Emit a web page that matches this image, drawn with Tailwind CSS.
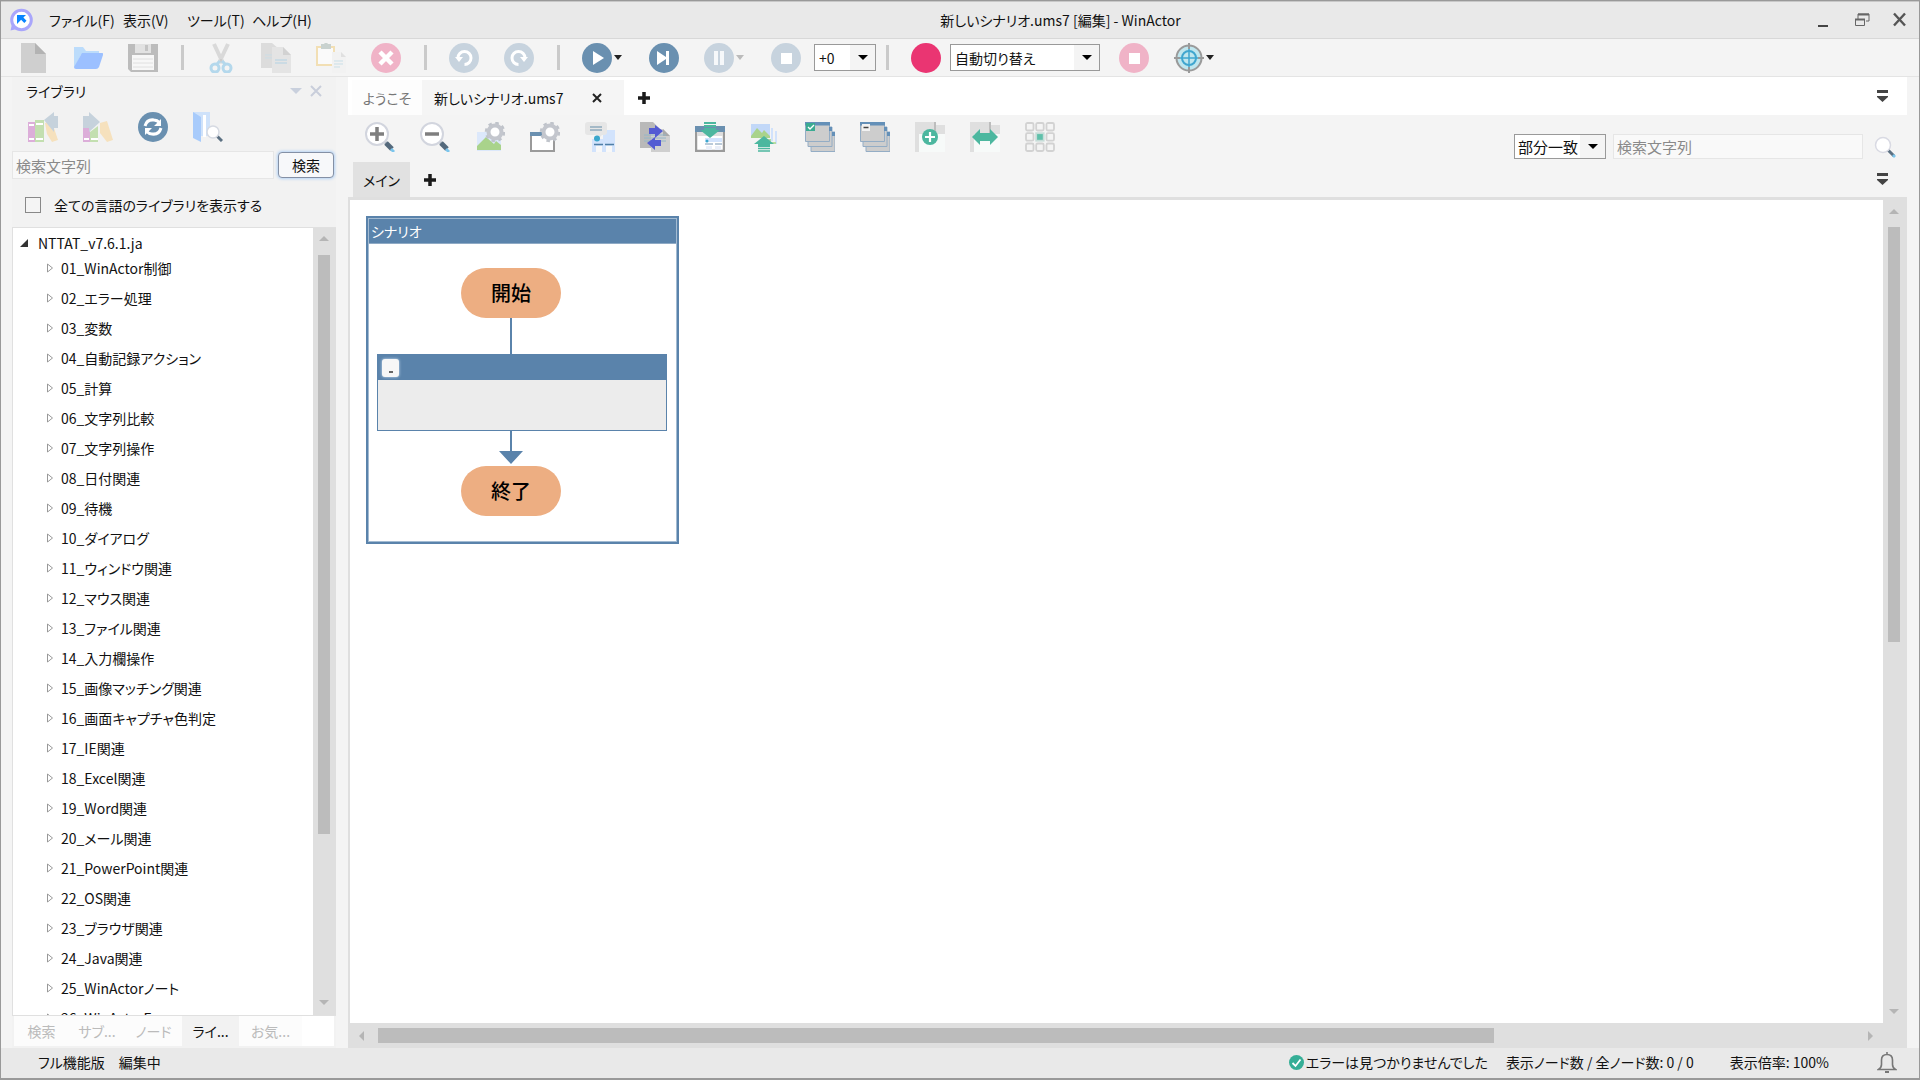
<!DOCTYPE html>
<html lang="ja">
<head>
<meta charset="utf-8">
<title>新しいシナリオ.ums7 [編集] - WinActor</title>
<script src="https://cdn.jsdelivr.net/npm/@tailwindcss/browser@4"></script>
</head>
<body class="h-screen overflow-hidden bg-[#f4f4f4] font-['Noto_Sans_CJK_JP',sans-serif] text-sm leading-5 text-[#111] [font-feature-settings:'palt']">
<div class="flex h-full flex-col border border-b-2 border-[#999]">

  <!-- Title bar -->
  <header class="flex h-[38px] shrink-0 items-center border-t border-b border-t-[#c8c8c8] border-b-[#d8d8d8] bg-[#e9e9e9]">
    <svg class="ml-2 size-6 shrink-0" viewBox="0 0 24 24"><path d="M3 16 1.500 22.500 8 21" fill="#a9a6fb"/><circle cx="12.500" cy="12" r="9.800" fill="#fff" stroke="#a9a6fb" stroke-width="3"/><path d="M8 7h9l-2.600 2.600 3.100 3.100-2.200 2.300-3.200-3.200L8 16z" fill="#0a84ff"/></svg>
    <nav class="ml-4 grid w-[265px] shrink-0 grid-cols-[74px_64px_65px_1fr] whitespace-nowrap">
      <button class="text-left">ファイル(F)</button><button class="text-left">表示(V)</button><button class="text-left">ツール(T)</button><button class="text-left">ヘルプ(H)</button>
    </nav>
    <h1 class="flex-1 text-center">新しいシナリオ.ums7 [編集] - WinActor</h1>
    <div class="flex w-28 shrink-0 items-center gap-[22px] pl-[9px]">
      <button aria-label="最小化"><svg class="size-4" viewBox="0 0 16 16"><path d="M2 13h10v2H2z" fill="#444"/></svg></button>
      <button aria-label="元に戻す"><svg class="size-4" viewBox="0 0 16 16" fill="none" stroke="#666"><path d="M4 7V2h11v7h-3" /><path d="M4 2.500h11" stroke-width="2"/><path d="M1.500 7.500h9v6h-9z"/><path d="M1 7.500h10" stroke-width="2"/></svg></button>
      <button aria-label="閉じる"><svg class="size-4" viewBox="0 0 16 16" fill="none" stroke="#555" stroke-width="2.400"><path d="m2 1.500 11 12m0-12-11 12"/></svg></button>
    </div>
  </header>

  <!-- Main toolbar -->
  <div class="flex h-[38px] shrink-0 items-center border-b border-[#e4e4e4] pl-[17px]" role="toolbar">
    <div class="flex gap-[25px]">
      <button aria-label="新規"><svg class="size-[30px]" viewBox="0 0 30 30"><path d="M3 0h14l11 11v19H3z" fill="#cfcfcf"/><path d="M17 0v11h11z" fill="#b3b3b3"/></svg></button>
      <button aria-label="開く"><svg class="size-[30px]" viewBox="0 0 30 30"><path d="M1 4h9l3 4h13v4H8L1 25z" fill="#bcdcfb"/><path d="M9 10h20q2 0 1 2l-4 12q-1 2-3 2H3q-2 0-2-2z" fill="#9cc0ff"/></svg></button>
      <button aria-label="保存"><svg class="size-[30px]" viewBox="0 0 30 30"><path d="M0 1h30v28H3l-3-3z" fill="#bcbcbc"/><path d="M4 12h22v15H4z" fill="#f7f7f7"/><path d="M7 1h16v9H7z" fill="#e2e2e2"/><path d="M17 2h3v6h-3z" fill="#c4c4c4"/><path d="M5 16h20M5 20h20M5 24h20" stroke="#e0e0e0"/></svg></button>
    </div>
    <span class="mr-[22px] ml-[23px] h-[25px] w-[3px] bg-[#cacaca]"></span>
    <div class="flex gap-[25px]">
      <button aria-label="切り取り"><svg class="size-[30px]" viewBox="0 0 30 30" fill="none"><path d="m8 1 9 19M22 1l-9 19" stroke="#d9d9d9" stroke-width="4"/><path d="M16 16h-2v3h2z" fill="#ccc"/><g stroke="#b4d8ec" stroke-width="3"><circle cx="9" cy="25" r="4"/><circle cx="21" cy="25" r="4"/><path d="m11 21 3-3m5 3-3-3"/></g></svg></button>
      <button aria-label="コピー"><svg class="size-[30px]" viewBox="0 0 30 30"><path d="M0 0h11l7 6v19H0z" fill="#dcdcdc"/><path d="M4 12h9M4 15h9" stroke="#cbdde6"/><path d="M11 4h11l8 8v18H11z" fill="#e4e4e4"/><path d="m22 4 8 8h-8z" fill="#d2d2d2"/><path d="M14 17h12M14 20h12" stroke="#c2d8e4" stroke-width="1.500"/></svg></button>
      <button aria-label="貼り付け"><svg class="size-[30px]" viewBox="0 0 30 30"><path d="M1 4h17v18H1z" fill="#fafafa" stroke="#f2dfb4" stroke-width="2"/><path d="M5 1h3q2-3 4 0h3v5H5z" fill="#c9d2cf"/><path d="M16 9h9l5 5v16H16z" fill="#f2f2f2"/><path d="m25 9 5 5h-5z" fill="#e0e0e0"/><path d="M18 18h9M18 21h9M18 24h6" stroke="#c9dfe8"/></svg></button>
      <button aria-label="削除"><svg class="size-[30px]" viewBox="0 0 30 30"><circle cx="15" cy="15" r="15" fill="#f0b3c7"/><path d="m9 9 12 12m0-12L9 21" stroke="#fff" stroke-width="4.500"/></svg></button>
    </div>
    <span class="mr-[22px] ml-[23px] h-[25px] w-[3px] bg-[#cacaca]"></span>
    <div class="flex gap-[25px]">
      <button aria-label="元に戻す"><svg class="size-[30px]" viewBox="0 0 30 30"><circle cx="15" cy="15" r="15" fill="#c7d3de"/><path d="M9 15a6.500 6.500 0 1 1 6.500 6.500" fill="none" stroke="#fff" stroke-width="3"/><path d="M6 14h8l-4 5z" fill="#fff"/></svg></button>
      <button aria-label="やり直し"><svg class="size-[30px]" viewBox="0 0 30 30"><circle cx="15" cy="15" r="15" fill="#c7d3de"/><path d="M21 15a6.500 6.500 0 1 0-6.500 6.500" fill="none" stroke="#fff" stroke-width="3"/><path d="M24 14h-8l4 5z" fill="#fff"/></svg></button>
    </div>
    <span class="mr-[22px] ml-[23px] h-[25px] w-[3px] bg-[#cacaca]"></span>
    <button class="flex items-center gap-0.5" aria-label="実行"><svg class="size-[30px]" viewBox="0 0 30 30"><circle cx="15" cy="15" r="15" fill="#6a90b0"/><path d="m11 8 11 7-11 7z" fill="#fff"/></svg><svg class="h-[5px] w-2" viewBox="0 0 8 5"><path d="M0 0h8L4 5z" fill="#222"/></svg></button>
    <button class="ml-[27px]" aria-label="ステップ実行"><svg class="size-[30px]" viewBox="0 0 30 30"><circle cx="15" cy="15" r="15" fill="#6a90b0"/><path d="m8 8 9 6V8h3v14h-3v-6l-9 6z" fill="#fff"/></svg></button>
    <button class="ml-[25px] flex items-center gap-0.5" aria-label="一時停止"><svg class="size-[30px]" viewBox="0 0 30 30"><circle cx="15" cy="15" r="15" fill="#c7d3de"/><path d="M10 8h4v14h-4zm6 0h4v14h-4z" fill="#f6f8fa"/></svg><svg class="h-[5px] w-2" viewBox="0 0 8 5"><path d="M0 0h8L4 5z" fill="#bbb"/></svg></button>
    <button class="ml-[27px]" aria-label="停止"><svg class="size-[30px]" viewBox="0 0 30 30"><circle cx="15" cy="15" r="15" fill="#c7d3de"/><path d="M10 10h11v11H10z" fill="#fff"/></svg></button>
    <div class="relative ml-[13px] flex">
      <select aria-label="速度" class="h-[27px] w-[62px] appearance-none border border-[#999] bg-white pl-1"><option>+0</option></select>
      <span class="pointer-events-none absolute inset-y-px right-px flex w-[25px] items-center justify-center bg-[#f4f4f4]"><svg class="h-[5px] w-2.5" viewBox="0 0 10 5"><path d="M0 0h10L5 5z"/></svg></span>
    </div>
    <span class="mr-[22px] ml-2.5 h-[25px] w-[3px] bg-[#cacaca]"></span>
    <button aria-label="記録"><svg class="size-[30px]" viewBox="0 0 30 30"><circle cx="15" cy="15" r="15" fill="#ea3572"/></svg></button>
    <div class="relative ml-[9px] flex">
      <select aria-label="記録モード" class="h-[27px] w-[150px] appearance-none border border-[#999] bg-white pl-1"><option>自動切り替え</option></select>
      <span class="pointer-events-none absolute inset-y-px right-px flex w-[25px] items-center justify-center bg-[#f4f4f4]"><svg class="h-[5px] w-2.5" viewBox="0 0 10 5"><path d="M0 0h10L5 5z"/></svg></span>
    </div>
    <button class="ml-[19px]" aria-label="記録停止"><svg class="size-[30px]" viewBox="0 0 30 30"><circle cx="15" cy="15" r="15" fill="#f0b3c7"/><path d="M10 10h11v11H10z" fill="#fff"/></svg></button>
    <button class="ml-[25px] flex items-center gap-0.5" aria-label="ターゲット選択"><svg class="size-[30px]" viewBox="0 0 30 30" fill="none"><circle cx="15" cy="15" r="12.500" fill="#bfe6ee" stroke="#9a9a9a" stroke-width="2"/><path d="M15 0v6m0 18v6M0 15h6m18 0h6" stroke="#9a9a9a" stroke-width="2"/><circle cx="15" cy="15" r="7" stroke="#3fa6cf" stroke-width="2"/><path d="M15 6v18M6 15h18" stroke="#3fa6cf" stroke-width="1.500"/></svg><svg class="h-[5px] w-2" viewBox="0 0 8 5"><path d="M0 0h8L4 5z" fill="#222"/></svg></button>
  </div>

  <!-- Workspace -->
  <div class="flex min-h-0 flex-1 gap-3 pr-3 pl-[11px]">

    <aside class="flex w-[324px] shrink-0 flex-col bg-[#f2f2f2]">
      <div class="flex h-7 items-center pr-3.5 pl-3.5">
        <h2 class="flex-1">ライブラリ</h2>
        <button aria-label="メニュー"><svg class="mr-2 h-[6px] w-3" viewBox="0 0 12 6"><path d="M0 0h12L6 6z" fill="#c9d0dd"/></svg></button>
        <button aria-label="閉じる"><svg class="size-3" viewBox="0 0 12 12"><path d="m1 1 10 10m0-10L1 11" stroke="#c9cedb" stroke-width="2"/></svg></button>
      </div>
      <div class="flex gap-[25px] pt-[7px] pl-4">
        <button aria-label="取り込み"><svg class="size-[30px]" viewBox="0 0 30 30"><path d="M0 10h7v20H0z" fill="#dcaed9"/><path d="M7 8h9v22H7z" fill="#c3dfb0"/><path d="m17 11 7-1 6 18-6 2-5-8z" fill="#f6e1bd"/><path d="M1 13h5M8 12h7M1 27h5M8 27h7" stroke="#fff" stroke-width="2"/><path d="M16 8 26 0v4h5v12h-5v4z" fill="#c6d2dc"/></svg></button>
        <button aria-label="書き出し"><svg class="size-[30px]" viewBox="0 0 30 30"><path d="M0 14h7v16H0z" fill="#dcaed9"/><path d="m7 20 8-6v16H7z" fill="#c3dfb0"/><path d="m17 11 7-2 6 19-6 2-7-9z" fill="#f6e1bd"/><path d="M1 27h5M8 27h7" stroke="#fff" stroke-width="2"/><path d="M0 4h6V0l11 10L6 20v-4H0z" fill="#c6d2dc"/></svg></button>
        <button aria-label="更新"><svg class="size-[30px]" viewBox="0 0 30 30" fill="none"><circle cx="15" cy="15" r="15" fill="#6a90b0"/><path d="M7 14q2-7 9-6 3 0 6 3M23 16q-2 7-9 6-3 0-6-3" stroke="#fff" stroke-width="3"/><path d="M23 7v7h-7zM7 23v-7h7z" fill="#fff"/></svg></button>
        <button aria-label="ライブラリ検索"><svg class="size-[30px]" viewBox="0 0 30 30"><path d="M0 0h17v24H0z" fill="#cfe2fa"/><path d="m0 0 8 5v25l-8-4z" fill="#a8cbfb"/><path d="M10 3h3v22h-3z" fill="#fff"/><path d="m23 23 6 6" stroke="#5b7082" stroke-width="3"/><circle cx="20" cy="20" r="6" fill="#fff" stroke="#d6dae2" stroke-width="1.500"/></svg></button>
      </div>
      <div class="flex items-center gap-1 pt-[9px]">
        <input type="text" aria-label="検索文字列" placeholder="検索文字列" class="h-7 w-[262px] border border-[#e6e6e6] bg-[#f8f8f8] px-[3px] text-[15px] placeholder:text-[#8a8a8a]">
        <button class="h-[26px] w-14 rounded-[4px] border border-[#8490a5] bg-[#f7f8fa] leading-4 shadow-[0_0_3px_1px_#b5d3f5]">検索</button>
      </div>
      <label class="flex h-12 items-center gap-[13px] pt-1 pl-[13px]">
        <input type="checkbox" class="size-4 appearance-none border border-[#888] bg-[#f4f4f4]">全ての言語のライブラリを表示する
      </label>
      <div class="flex min-h-0 flex-1 border border-r-0 border-[#e0e0e0] bg-white">
        <div class="min-w-0 flex-1 overflow-hidden">
          <div class="flex h-[25px] items-center gap-2.5 pt-[5px] pl-[7px]"><svg class="size-2" viewBox="0 0 8 8"><path d="M8 0v8H0z" fill="#333"/></svg>NTTAT_v7.6.1.ja</div>
          <ul id="tree"></ul>
        </div>
        <div class="flex w-[23px] flex-col items-center bg-[#dfdfdf] pt-2 pr-px pb-2.5">
          <svg class="h-[5px] w-2.5 shrink-0" viewBox="0 0 10 5"><path d="M0 5h10L5 0z" fill="#b5b5b5"/></svg>
          <div class="flex min-h-0 w-3 flex-1 flex-col pt-3.5 pb-3"><div class="bg-[#bcbcbc]" style="height:79%"></div></div>
          <svg class="h-[5px] w-2.5 shrink-0" viewBox="0 0 10 5"><path d="M0 0h10L5 5z" fill="#b5b5b5"/></svg>
        </div>
      </div>
      <div class="mr-0.5 mb-0.5 ml-0.5 flex h-[30px] shrink-0 bg-white text-[#bbb]" role="tablist">
        <button class="w-[55px] bg-[#fcfcfc]" role="tab">検索</button><button class="w-14 bg-[#fcfcfc]" role="tab">サブ...</button><button class="w-[57px] bg-[#fcfcfc]" role="tab">ノード</button><button class="w-[57px] bg-[#f2f2f2] text-[#111]" role="tab">ライ...</button><button class="w-[63px] bg-[#fcfcfc]" role="tab">お気...</button>
      </div>
    </aside>

    <main class="flex min-w-0 flex-1 flex-col">
      <div class="flex h-[38px] shrink-0 items-stretch bg-white pt-[3px] pl-1" role="tablist">
        <button class="w-[70px] bg-[#fdfdfd] text-[#777]" role="tab">ようこそ</button>
        <div class="flex w-[202px] items-center justify-between bg-[#f5f5f5] pr-[22px] pl-3"><button role="tab">新しいシナリオ.ums7</button><button aria-label="タブを閉じる"><svg class="size-2.5" viewBox="0 0 10 10"><path d="m1 1 8 8m0-8L1 9" stroke="#222" stroke-width="2"/></svg></button></div>
        <button class="ml-3.5" aria-label="タブを追加"><svg class="size-3" viewBox="0 0 12 12"><path d="M6 0v12M0 6h12" stroke="#1a1a1a" stroke-width="3.500"/></svg></button>
        <button class="mr-[19px] ml-auto pb-1" aria-label="タブ一覧"><svg class="h-3 w-[11px]" viewBox="0 0 11 12"><path d="M0 0h11v3H0zM0 6h11v1l-5.500 5L0 7z" fill="#444"/></svg></button>
      </div>

      <div class="flex h-[47px] shrink-0 items-start pt-[7px] pl-[17px]" role="toolbar">
        <div class="flex gap-[25px]">
          <button aria-label="拡大"><svg class="size-[30px]" viewBox="0 0 30 30"><path d="m18 18 4 4" stroke="#a9b4bf" stroke-width="3"/><path d="m21 21 6 6" stroke="#54697c" stroke-width="5"/><path d="m27 26 3 3-2 2-3-3z" fill="#7cc5ec"/><circle cx="12" cy="12" r="11" fill="#fff" stroke="#d2d5de" stroke-width="2"/><path d="M12 5v14M5 12h14" stroke="#7f7f7f" stroke-width="3.500"/></svg></button>
          <button aria-label="縮小"><svg class="size-[30px]" viewBox="0 0 30 30"><path d="m18 18 4 4" stroke="#a9b4bf" stroke-width="3"/><path d="m21 21 6 6" stroke="#54697c" stroke-width="5"/><path d="m27 26 3 3-2 2-3-3z" fill="#7cc5ec"/><circle cx="12" cy="12" r="11" fill="#fff" stroke="#d2d5de" stroke-width="2"/><path d="M5 12h14" stroke="#7f7f7f" stroke-width="3.500"/></svg></button>
          <button aria-label="画像設定"><svg class="size-[30px]" viewBox="0 0 30 30"><path d="M2 10h24v19H2z" fill="#dce8fb"/><path d="m2 24 9-9 8 7 2-3 5 4v5H2z" fill="#a9d38b"/><circle cx="20" cy="10" r="9" fill="none" stroke="#bfc3ca" stroke-width="2.500" stroke-dasharray="3.500 3.570"/><circle cx="20" cy="10" r="6.500" fill="#fff" stroke="#c3c6cd" stroke-width="4"/></svg></button>
          <button aria-label="ウィンドウ設定"><svg class="size-[30px]" viewBox="0 0 30 30"><path d="M1 13h23v16H1z" fill="#fff" stroke="#9a9a9a" stroke-width="2"/><path d="M0 10h15v4H0z" fill="#6a90b0"/><circle cx="20" cy="10" r="9" fill="none" stroke="#bfc3ca" stroke-width="2.500" stroke-dasharray="3.500 3.570"/><circle cx="20" cy="10" r="6.500" fill="#fff" stroke="#c3c6cd" stroke-width="4"/></svg></button>
          <button aria-label="コメント表示"><svg class="size-[30px]" viewBox="0 0 30 30"><path d="M7 17h11V8h12v22H7z" fill="#d2e3fc"/><path d="M11 24h6v6h-6zm10 0h6v6h-6z" fill="#f8f8f8"/><path d="M9 22.500h9m2 0h9" stroke="#4f7fa6" stroke-width="1.500"/><rect width="22" height="13" rx="3" fill="#e6e6e6"/><path d="m11 13 3 3 3-3z" fill="#e6e6e6"/><path d="M5 5h12M5 8h12" stroke="#8eabbd" stroke-width="1.300"/><circle cx="12" cy="16.500" r="3" fill="#3ba7cc"/></svg></button>
          <button aria-label="差分"><svg class="size-[30px]" viewBox="0 0 30 30"><path d="M0 0h13l6 6v20H0z" fill="#b9b9b9"/><path d="M11 7h12l7 7v16H11z" fill="#cfcfcf"/><path d="m23 7 7 7h-7z" fill="#aaa"/><path d="M4 13h22M4 16h22M4 19h22" stroke="#94b6c6"/><path d="M9 6h6V3l8 6-8 7v-4H9zM21 18h-6v-3l-8 6 8 7v-4h6z" fill="#535bd3"/></svg></button>
          <button aria-label="ウィンドウ取り込み"><svg class="size-[30px]" viewBox="0 0 30 30"><path d="M1 6h28v23H1z" fill="#fff" stroke="#9a9a9a" stroke-width="2.500"/><path d="M0 4h30v6H0z" fill="#6a90b0"/><path d="M2 10h26v4H2z" fill="#dedede"/><path d="M10 16h17v4H10z" fill="#d2e3fc"/><path d="M10 22h8m2 0h7" stroke="#7696b3"/><path d="M11 24h6v4h-6zm9 0h6v4h-6z" fill="#e9eef8"/><circle cx="12" cy="19" r="1.500" fill="#3ba7cc"/><path d="M9 1h12M9 4h12" stroke="#4cb79f" stroke-width="1.800"/><path d="M9 6h12v2h4l-10 8-10-8h4z" fill="#4cb79f"/></svg></button>
          <button aria-label="画像書き出し"><svg class="size-[30px]" viewBox="0 0 30 30" fill="none"><path d="M1 2h19v13H1z" fill="#c2d8f8"/><path d="m1 14 6-8 5 5 2-3 6 6v2H1z" fill="#a9d38b"/><path d="M22 6v12h-3M26 9v12h-5" stroke="#d1e2fb" stroke-width="2"/><path d="M21 18h-4M26 21h-4" stroke="#b7dca0" stroke-width="2"/><path d="m14 14 10 8h-4v3H8v-3H4z" fill="#4cb79f"/><path d="M8 26.500h12M8 29h12" stroke="#4cb79f" stroke-width="1.500"/></svg></button>
          <button aria-label="全て展開"><svg class="size-[30px]" viewBox="0 0 30 30" stroke="#94adc5"><path d="M6 10h24v19.500H6z" fill="#cdcdcd"/><path d="M3 5h24v19.500H3z" fill="#cdcdcd"/><path d="M.5.500h24v19H.500z" fill="#cdcdcd"/><path d="M0 0h25v3.500H0zM24 5h3v4h-3zM27 10h3v4h-3z" fill="#6490b8" stroke="none"/><path d="M1 1h9v8H1z" fill="#3bab92" stroke="none"/><path d="m3 5 2 2 4-4" fill="none" stroke="#fff" stroke-width="1.300"/></svg></button>
          <button aria-label="全て折りたたみ"><svg class="size-[30px]" viewBox="0 0 30 30" stroke="#94adc5"><path d="M6 10h24v19.500H6z" fill="#cdcdcd"/><path d="M3 5h24v19.500H3z" fill="#cdcdcd"/><path d="M.5.500h24v19H.500z" fill="#cdcdcd"/><path d="M0 0h25v3.500H0zM24 5h3v4h-3zM27 10h3v4h-3z" fill="#6490b8" stroke="none"/><path d="M2 2h8v7H2z" fill="#f2f2f2" stroke="none"/><path d="M3.500 5.500h5" stroke="#444" stroke-width="1.500"/></svg></button>
          <button aria-label="ノード追加"><svg class="size-[30px]" viewBox="0 0 30 30"><path d="M4 12h26v18H4z" fill="#f7faf9"/><path d="M0 0h20v12H4v18H0zM21 3h9v9h-9z" fill="#dfdfdf"/><path d="M19 0h2v12h-2z" fill="#bdbdbd"/><circle cx="15" cy="15" r="8" fill="#4cb79f"/><path d="M15 10v10M10 15h10" stroke="#fff" stroke-width="2.200"/></svg></button>
          <button aria-label="幅を合わせる"><svg class="size-[30px]" viewBox="0 0 30 30"><path d="M4 12h26v18H4z" fill="#f7faf9"/><path d="M0 0h20v12H4v18H0zM21 3h9v9h-9z" fill="#dfdfdf"/><path d="M19 0h2v12h-2z" fill="#bdbdbd"/><path d="m2 15 8-8v4h10V7l8 8-8 8v-4H10v4z" fill="#4cb79f"/></svg></button>
          <button aria-label="グリッド"><svg class="size-[30px]" viewBox="0 0 30 30" fill="none" stroke="#d2d2d2" stroke-width="1.800"><rect x="1" y="1" width="7.500" height="7.500" rx="1.500"/><rect x="11.200" y="1" width="7.500" height="7.500" rx="1.500"/><rect x="21.500" y="1" width="7.500" height="7.500" rx="1.500"/><rect x="1" y="11.200" width="7.500" height="7.500" rx="1.500"/><rect x="11.200" y="11.200" width="7.500" height="7.500" fill="#5fc0aa" stroke="#c5dcd7"/><rect x="21.500" y="11.200" width="7.500" height="7.500" rx="1.500"/><rect x="1" y="21.500" width="7.500" height="7.500" rx="1.500"/><rect x="11.200" y="21.500" width="7.500" height="7.500" rx="1.500"/><rect x="21.500" y="21.500" width="7.500" height="7.500" rx="1.500"/></svg></button>
        </div>
        <div class="mt-3 mr-[11px] ml-auto flex items-center text-[15px]">
          <div class="relative flex">
            <select aria-label="一致条件" class="h-[25px] w-[92px] appearance-none border border-[#999] bg-white pl-[3px]"><option>部分一致</option></select>
            <span class="pointer-events-none absolute inset-y-px right-px flex w-[25px] items-center justify-center bg-[#f4f4f4]"><svg class="h-[5px] w-2.5" viewBox="0 0 10 5"><path d="M0 0h10L5 5z"/></svg></span>
          </div>
          <input type="text" aria-label="シナリオ内検索" placeholder="検索文字列" class="ml-[7px] h-[25px] w-[250px] border border-[#e6e6e6] bg-[#f9f9f9] px-[3px] placeholder:text-[#8a8a8a]">
          <button class="ml-[11px]" aria-label="検索"><svg class="size-[22px]" viewBox="0 0 22 22"><path d="m14 14 6 6" stroke="#5b7082" stroke-width="3"/><path d="m18 20 2-2 2 2-2 2z" fill="#7cc5ec"/><circle cx="9" cy="9" r="7.500" fill="#fff" stroke="#d9dae3" stroke-width="1.500"/></svg></button>
        </div>
      </div>

      <div class="flex h-[35px] shrink-0 items-stretch pl-[5px]" role="tablist">
        <button class="w-[57px] bg-[#e1e1e1]" role="tab">メイン</button>
        <button class="ml-3.5" aria-label="サブルーチンを追加"><svg class="size-3" viewBox="0 0 12 12"><path d="M6 0v12M0 6h12" stroke="#1a1a1a" stroke-width="3.500"/></svg></button>
        <button class="mr-[19px] ml-auto pb-0.5" aria-label="サブルーチン一覧"><svg class="h-3 w-[11px]" viewBox="0 0 11 12"><path d="M0 0h11v3H0zM0 6h11v1l-5.500 5L0 7z" fill="#444"/></svg></button>
      </div>

      <div class="flex min-h-0 flex-1 border-t-[3px] border-l-2 border-[#dfdfdf]">
        <div class="flex min-w-0 flex-1 flex-col">
          <!-- Flowchart canvas -->
          <div class="relative min-h-0 flex-1 overflow-hidden bg-white">
            <section class="absolute top-4 left-4 h-[328px] w-[313px] border-2 border-[#5a83ab] shadow-[inset_0_0_0_1px_#a3bbd2]">
              <h3 class="m-px h-[25px] border-b border-[#8faac5] bg-[#5a83ab] pl-0.5 leading-6 text-white">シナリオ</h3>
              <svg class="absolute top-[100px] left-[131px] h-[146px] w-6" viewBox="0 0 24 146"><path d="M11 0h2v133h11l-12 13L0 133h11z" fill="#5a83ab"/></svg>
              <div class="absolute top-[50px] left-[93px] flex h-[50px] w-[100px] items-center justify-center rounded-full bg-[#edae82] text-xl font-medium text-black">開始</div>
              <div class="absolute top-[136px] left-[9px] h-[77px] w-[290px] border border-[#5a83ab] bg-[#ececec]">
                <div class="flex h-[25px] items-center bg-[#5a83ab] pl-1"><button class="flex h-[18px] w-[17px] items-end justify-center rounded-[3px] bg-[#f7f7f7] pb-1 shadow-[0_0_3px_#cfe2f5]" aria-label="折りたたむ"><span class="h-0.5 w-1 bg-[#666]"></span></button></div>
              </div>
              <div class="absolute top-[248px] left-[93px] flex h-[50px] w-[100px] items-center justify-center rounded-full bg-[#edae82] text-xl font-medium text-black">終了</div>
            </section>
          </div>
          <div class="flex h-[25px] shrink-0 items-center bg-[#dfdfdf] pr-2.5 pl-[9px]">
            <svg class="h-2.5 w-[5px] shrink-0" viewBox="0 0 5 10"><path d="M5 0v10L0 5z" fill="#b5b5b5"/></svg>
            <div class="h-[15px] min-w-0 flex-1 px-3.5"><div class="h-full bg-[#bcbcbc]" style="width:75.600%"></div></div>
            <svg class="h-2.5 w-[5px] shrink-0" viewBox="0 0 5 10"><path d="M0 0v10l5-5z" fill="#b5b5b5"/></svg>
          </div>
        </div>
        <div class="flex w-6 flex-col items-center bg-[#dfdfdf] pt-[9px] pr-0.5 pb-[34px]">
          <svg class="h-[5px] w-2.5 shrink-0" viewBox="0 0 10 5"><path d="M0 5h10L5 0z" fill="#b5b5b5"/></svg>
          <div class="min-h-0 w-3 flex-1 py-[13px]"><div class="bg-[#bcbcbc]" style="height:54%"></div></div>
          <svg class="h-[5px] w-2.5 shrink-0" viewBox="0 0 10 5"><path d="M0 0h10L5 5z" fill="#b5b5b5"/></svg>
        </div>
      </div>
    </main>
  </div>

  <!-- Status bar -->
  <footer class="flex h-[30px] shrink-0 items-center bg-[#e9e9e9] pr-[22px] pb-0.5 pl-[37px] whitespace-nowrap">
    <span>フル機能版</span><span class="ml-3.5">編集中</span>
    <svg class="ml-auto size-[15px]" viewBox="0 0 15 15"><circle cx="7.500" cy="7.500" r="7.500" fill="#35ae96"/><path d="m3.500 8 3 3 5-6.500" fill="none" stroke="#fff" stroke-width="1.800"/></svg>
    <span class="ml-0.5">エラーは見つかりませんでした</span>
    <span class="ml-[18px]">表示ノード数 / 全ノード数: 0 / 0</span>
    <span class="ml-9">表示倍率: 100%</span>
    <button class="ml-12" aria-label="通知"><svg class="h-[22px] w-5" viewBox="0 0 20 22"><path d="M8 20h4v2H8z" fill="#777"/><path d="M10 1v2M1.500 18.500h17q-3-2-3-5V9q0-5.500-5.500-5.500T4.500 9v4.500q0 3-3 5z" fill="none" stroke="#777" stroke-width="1.600"/></svg></button>
  </footer>
</div>

<script>
  const names = ["01_WinActor制御","02_エラー処理","03_変数","04_自動記録アクション","05_計算","06_文字列比較","07_文字列操作","08_日付関連","09_待機","10_ダイアログ","11_ウィンドウ関連","12_マウス関連","13_ファイル関連","14_入力欄操作","15_画像マッチング関連","16_画面キャプチャ色判定","17_IE関連","18_Excel関連","19_Word関連","20_メール関連","21_PowerPoint関連","22_OS関連","23_ブラウザ関連","24_Java関連","25_WinActorノート","26_WinActorEye"];
  document.getElementById("tree").innerHTML = names.map(n =>
    `<li class="flex h-[30px] items-center gap-2 pl-[34px]"><svg class="h-2.5 w-[6px]" viewBox="0 0 6 10"><path d="M.5 1v8l5-4z" fill="none" stroke="#999"/></svg>${n}</li>`).join("");
</script>
</body>
</html>
